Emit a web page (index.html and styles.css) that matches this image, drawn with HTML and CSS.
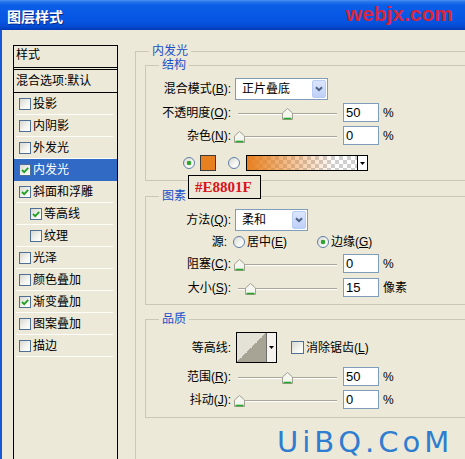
FILE: index.html
```html
<!DOCTYPE html>
<html lang="zh-CN">
<head>
<meta charset="utf-8">
<title>图层样式</title>
<link rel="stylesheet" href="styles.css">
</head>
<body>
<div class="window">
  <div class="titlebar">
    <span class="title">图层样式</span>
    <span class="brand">webjx.com</span>
  </div>
  <div class="client">
    <div class="sidebar">
      <div class="list-head">样式</div>
      <div class="list-blend">混合选项:默认</div>
      <div class="item"><span class="cb"></span>投影</div>
      <div class="item"><span class="cb"></span>内阴影</div>
      <div class="item"><span class="cb"></span>外发光</div>
      <div class="item sel"><span class="cb"><svg viewBox="0 0 10 10" width="10" height="10"><path d="M2 5 L4.2 7.2 L8.2 2.8" stroke="#21A121" stroke-width="1.8" fill="none"/></svg></span>内发光</div>
      <div class="item"><span class="cb"><svg viewBox="0 0 10 10" width="10" height="10"><path d="M2 5 L4.2 7.2 L8.2 2.8" stroke="#21A121" stroke-width="1.8" fill="none"/></svg></span>斜面和浮雕</div>
      <div class="item sub"><span class="cb"><svg viewBox="0 0 10 10" width="10" height="10"><path d="M2 5 L4.2 7.2 L8.2 2.8" stroke="#21A121" stroke-width="1.8" fill="none"/></svg></span>等高线</div>
      <div class="item sub"><span class="cb"></span>纹理</div>
      <div class="item"><span class="cb"></span>光泽</div>
      <div class="item"><span class="cb"></span>颜色叠加</div>
      <div class="item"><span class="cb"><svg viewBox="0 0 10 10" width="10" height="10"><path d="M2 5 L4.2 7.2 L8.2 2.8" stroke="#21A121" stroke-width="1.8" fill="none"/></svg></span>渐变叠加</div>
      <div class="item"><span class="cb"></span>图案叠加</div>
      <div class="item"><span class="cb"></span>描边</div>
    </div>

    <div class="main">
      <fieldset class="group outer">
        <legend>内发光</legend>
        <div class="outer-body">

          <fieldset class="group struct">
            <legend>结构</legend>
            <div class="row r-combo">
              <span class="lbl">混合模式(<u>B</u>):</span>
              <span class="combo w-blend"><span>正片叠底</span><span class="combo-btn"><svg width="8" height="6" viewBox="0 0 8 6"><path d="M1 1.2 L4 4.2 L7 1.2" stroke="#4D6185" stroke-width="2" fill="none"/></svg></span></span>
            </div>
            <div class="row r-field gap3">
              <span class="lbl">不透明度(<u>O</u>):</span>
              <span class="slider"><svg class="thumb" style="left:47px" width="11" height="12" viewBox="0 0 11 12"><path d="M5.5 0.5 L10.5 5 V11.5 H0.5 V5 Z" fill="#F6F6F1" stroke="#A09F92"/><path d="M1.5 10.5 H9.5" stroke="#2DA32D" stroke-width="1.6"/></svg></span>
              <span class="num">50</span><span class="unit">%</span>
            </div>
            <div class="row r-field gap4">
              <span class="lbl">杂色(<u>N</u>):</span>
              <span class="slider"><svg class="thumb" style="left:-1px" width="11" height="12" viewBox="0 0 11 12"><path d="M5.5 0.5 L10.5 5 V11.5 H0.5 V5 Z" fill="#F6F6F1" stroke="#A09F92"/><path d="M1.5 10.5 H9.5" stroke="#2DA32D" stroke-width="1.6"/></svg></span>
              <span class="num">0</span><span class="unit">%</span>
            </div>
            <div class="row r-color">
              <span class="radio on"></span>
              <span class="swatch"></span>
              <span class="radio r2"></span>
              <span class="grad"><span class="grad-fill"></span><span class="mini-btn"><svg width="5" height="3" viewBox="0 0 5 3"><path d="M0 0H5L2.5 3Z" fill="#000"/></svg></span></span>
            </div>
          </fieldset>

          <fieldset class="group elems">
            <legend>图素</legend>
            <div class="row r-combo">
              <span class="lbl">方法(<u>Q</u>):</span>
              <span class="combo w-method"><span>柔和</span><span class="combo-btn"><svg width="8" height="6" viewBox="0 0 8 6"><path d="M1 1.2 L4 4.2 L7 1.2" stroke="#4D6185" stroke-width="2" fill="none"/></svg></span></span>
            </div>
            <div class="row r-source">
              <span class="lbl src">源:</span>
              <span class="radio src-r"></span><span class="rtext">居中(<u>E</u>)</span>
              <span class="radio on src-r2"></span><span class="rtext">边缘(<u>G</u>)</span>
            </div>
            <div class="row r-field gap4">
              <span class="lbl">阻塞(<u>C</u>):</span>
              <span class="slider"><svg class="thumb" style="left:-1px" width="11" height="12" viewBox="0 0 11 12"><path d="M5.5 0.5 L10.5 5 V11.5 H0.5 V5 Z" fill="#F6F6F1" stroke="#A09F92"/><path d="M1.5 10.5 H9.5" stroke="#2DA32D" stroke-width="1.6"/></svg></span>
              <span class="num">0</span><span class="unit">%</span>
            </div>
            <div class="row r-field gap5">
              <span class="lbl">大小(<u>S</u>):</span>
              <span class="slider"><svg class="thumb" style="left:10px" width="11" height="12" viewBox="0 0 11 12"><path d="M5.5 0.5 L10.5 5 V11.5 H0.5 V5 Z" fill="#F6F6F1" stroke="#A09F92"/><path d="M1.5 10.5 H9.5" stroke="#2DA32D" stroke-width="1.6"/></svg></span>
              <span class="num">15</span><span class="unit">像素</span>
            </div>
          </fieldset>

          <fieldset class="group quality">
            <legend>品质</legend>
            <div class="row r-contour">
              <span class="lbl">等高线:</span>
              <span class="contour"><span class="contour-img"></span><span class="mini-btn"><svg width="5" height="3" viewBox="0 0 5 3"><path d="M0 0H5L2.5 3Z" fill="#000"/></svg></span></span>
              <span class="cb big"></span><span class="cbtext">消除锯齿(<u>L</u>)</span>
            </div>
            <div class="row r-field gap4">
              <span class="lbl">范围(<u>R</u>):</span>
              <span class="slider"><svg class="thumb" style="left:47px" width="11" height="12" viewBox="0 0 11 12"><path d="M5.5 0.5 L10.5 5 V11.5 H0.5 V5 Z" fill="#F6F6F1" stroke="#A09F92"/><path d="M1.5 10.5 H9.5" stroke="#2DA32D" stroke-width="1.6"/></svg></span>
              <span class="num">50</span><span class="unit">%</span>
            </div>
            <div class="row r-field gap4">
              <span class="lbl">抖动(<u>J</u>):</span>
              <span class="slider"><svg class="thumb" style="left:-1px" width="11" height="12" viewBox="0 0 11 12"><path d="M5.5 0.5 L10.5 5 V11.5 H0.5 V5 Z" fill="#F6F6F1" stroke="#A09F92"/><path d="M1.5 10.5 H9.5" stroke="#2DA32D" stroke-width="1.6"/></svg></span>
              <span class="num">0</span><span class="unit">%</span>
            </div>
          </fieldset>

        </div>
      </fieldset>
    </div>
  </div>

  <div class="tip">#E8801F</div>
  <div class="watermark">UiBQ.CoM</div>
</div>
</body>
</html>
```

FILE: styles.css
```css
* { box-sizing: border-box; }
html, body { margin: 0; padding: 0; }
body {
  width: 465px;
  height: 459px;
  overflow: hidden;
  background: #ECE9D8;
  font: 12px/14px "Liberation Sans", "Noto Sans CJK SC", sans-serif;
  color: #000;
}
u { text-decoration: underline; text-underline-offset: 1px; }

.window {
  position: relative;
  width: 465px;
  height: 459px;
  overflow: hidden;
  background: #ECE9D8;
}

/* Title bar */
.titlebar {
  height: 30px;
  display: flex;
  align-items: center;
  justify-content: space-between;
  padding: 0 12px 0 7px;
  background: linear-gradient(to bottom,
    #4A90F2 0px, #2473EA 2px, #0B5FE6 5px, #0859E6 14px,
    #0654DF 22px, #0449D0 27px, #0338B0 30px);
}
.title {
  color: #fff;
  font: bold 14px/16px "Noto Sans CJK SC", sans-serif;
  text-shadow: 1px 1px 0 #0A2A8C;
  margin-top: 2px;
}
.brand {
  color: #D9253C;
  font: bold 21px/22px "Liberation Sans", Arial, sans-serif;
  margin-top: -2px;
}

/* Client area */
.client {
  display: flex;
  height: 429px;
  border-left: 2px solid #1A56D8;
}

/* Left style list */
.sidebar {
  flex: none;
  width: 105px;
  margin: 15px 0 0 11px;
  border: 1px solid #000;
  border-bottom: 0;
}
.list-head {
  height: 24px;
  padding: 0 0 3px 2px;
  display: flex;
  align-items: center;
  border-bottom: 3px double #000;
}
.list-blend {
  height: 23px;
  padding-left: 2px;
  display: flex;
  align-items: center;
  border-bottom: 1px solid #000;
}
.item {
  height: 22px;
  display: flex;
  align-items: center;
  padding: 0 0 1px 5px;
  background: linear-gradient(#FDFDFA, #FDFDFA) no-repeat 2px 100% / calc(100% - 6px) 1px;
}
.item.sub { padding-left: 16px; }
.item.sel {
  background: #316AC5;
  color: #fff;
}
.cb {
  flex: none;
  width: 12px;
  height: 12px;
  margin-right: 2px;
  border: 1px solid #4F6F94;
  background: linear-gradient(135deg, #D8D8D2, #F4F4F0 60%, #FFFFFF);
  display: flex;
  align-items: center;
  justify-content: center;
}
.cb svg { display: block; }

/* Right side */
.main {
  flex: none;
  width: 350px;
  margin: 14px 0 0 17px;
}
.group {
  margin: 0;
  padding: 0;
  min-width: 0;
  border: 1px solid #CBC8B8;
}
.group > legend {
  margin-left: 13px;
  padding: 0 3px;
  font: 12px/14px "Liberation Sans", "Noto Sans CJK SC", sans-serif;
  color: #1A4FCB;
}
.outer { padding-bottom: 80px; }
.outer-body { margin-left: 9px; }

.struct { padding: 6px 0 9px 0; }
.elems { margin-top: 8px; padding: 6px 0 7px 0; }
.quality { margin-top: 7px; padding: 6px 0 8px 0; }

.row {
  display: flex;
  align-items: center;
  height: 19px;
}
.gap3 { margin-top: 3px; }
.gap4 { margin-top: 4px; }
.gap5 { margin-top: 5px; }
.lbl {
  flex: none;
  width: 85px;
  text-align: right;
  white-space: nowrap;
}
.lbl.src { padding-right: 4px; }

/* Combo box */
.r-combo { height: 22px; }
.combo {
  flex: none;
  margin-left: 4px;
  height: 22px;
  border: 1px solid #7F9DB9;
  background: #fff;
  display: flex;
  align-items: center;
  justify-content: space-between;
  padding-left: 6px;
}
.w-blend { width: 93px; }
.w-method { width: 73px; }
.combo-btn {
  width: 14px;
  height: 18px;
  margin-right: 1px;
  border: 1px solid #B8CCF4;
  border-radius: 2px;
  background: linear-gradient(#DCE6FD, #BED0F8);
  display: flex;
  align-items: center;
  justify-content: center;
}

/* Slider */
.slider {
  position: relative;
  flex: none;
  width: 108px;
  height: 19px;
  margin-left: 4px;
  background:
    linear-gradient(#A9A699, #A9A699) no-repeat 3px 10px / 99px 1px,
    linear-gradient(#FFFFFF, #FFFFFF) no-repeat 3px 11px / 99px 1px;
}
.thumb {
  position: absolute;
  top: 5px;
  display: block;
}
.num {
  flex: none;
  width: 36px;
  height: 19px;
  border: 1px solid #7F9DB9;
  background: #fff;
  padding-left: 2px;
  font: 13px/17px "Liberation Sans", Arial, sans-serif;
}
.unit { margin-left: 4px; }

/* Color row */
.r-color {
  height: 16px;
  margin-top: 10px;
  padding-left: 37px;
}
.radio {
  flex: none;
  width: 12px;
  height: 12px;
  border-radius: 50%;
  border: 1px solid #5F7FA6;
  background: linear-gradient(135deg, #D9D9D2, #F6F6F2 60%, #FFFFFF);
}
.radio.on {
  background:
    radial-gradient(circle, #2FA52F 0 2px, rgba(47,165,47,0) 2.6px),
    linear-gradient(135deg, #D9D9D2, #F6F6F2 60%, #FFFFFF);
}
.swatch {
  flex: none;
  width: 16px;
  height: 16px;
  margin-left: 5px;
  border: 1px solid #3A3A3A;
  background: #E8801F;
}
.radio.r2 { margin-left: 12px; }
.grad {
  flex: none;
  display: flex;
  width: 122px;
  height: 16px;
  margin-left: 6px;
  border: 1px solid #000;
}
.grad-fill {
  flex: 1;
  background:
    linear-gradient(90deg, #E8801F 0%, rgba(232,128,31,0.55) 35%, rgba(232,128,31,0) 80%),
    linear-gradient(45deg, #CFCFCF 25%, transparent 25%, transparent 75%, #CFCFCF 75%),
    linear-gradient(45deg, #CFCFCF 25%, #FFFFFF 25%, #FFFFFF 75%, #CFCFCF 75%);
  background-size: 100% 100%, 8px 8px, 8px 8px;
  background-position: 0 0, 0 0, 4px 4px;
}
.mini-btn {
  flex: none;
  width: 10px;
  border-left: 1px solid #000;
  background: #FFFFFF;
  display: flex;
  align-items: center;
  justify-content: center;
}

/* Source radios */
.r-source {
  height: 16px;
  margin-top: 3px;
}
.radio.src-r { margin-left: 2px; }
.rtext { margin-left: 2px; white-space: nowrap; }
.radio.src-r2 { margin-left: 30px; }

/* Contour row */
.r-contour { height: 31px; }
.contour {
  flex: none;
  display: flex;
  width: 41px;
  height: 31px;
  margin-left: 5px;
  border: 1px solid #000;
  background: #fff;
}
.contour-img {
  flex: none;
  width: 29px;
  background: linear-gradient(to top left, #A7A395 50%, #E4E1D6 50%);
}
.contour .mini-btn {
  border-left: 1px solid #6E6E6E;
  background: #F4F3EE;
}
.cb.big {
  width: 13px;
  height: 13px;
  margin-left: 14px;
  margin-right: 2px;
}
.cbtext { white-space: nowrap; }

/* Overlays */
.tip {
  position: absolute;
  left: 188px;
  top: 175px;
  width: 73px;
  height: 24px;
  border: 1px solid #000;
  background: #ECE9D8;
  padding-left: 6px;
  color: #D8141E;
  font: bold 15px/22px "Liberation Serif", "Times New Roman", serif;
}
.watermark {
  position: absolute;
  left: 277px;
  top: 428px;
  color: #2F7DD1;
  font: 29px/28px "DejaVu Sans", sans-serif;
  letter-spacing: 4px;
  white-space: nowrap;
}
```
